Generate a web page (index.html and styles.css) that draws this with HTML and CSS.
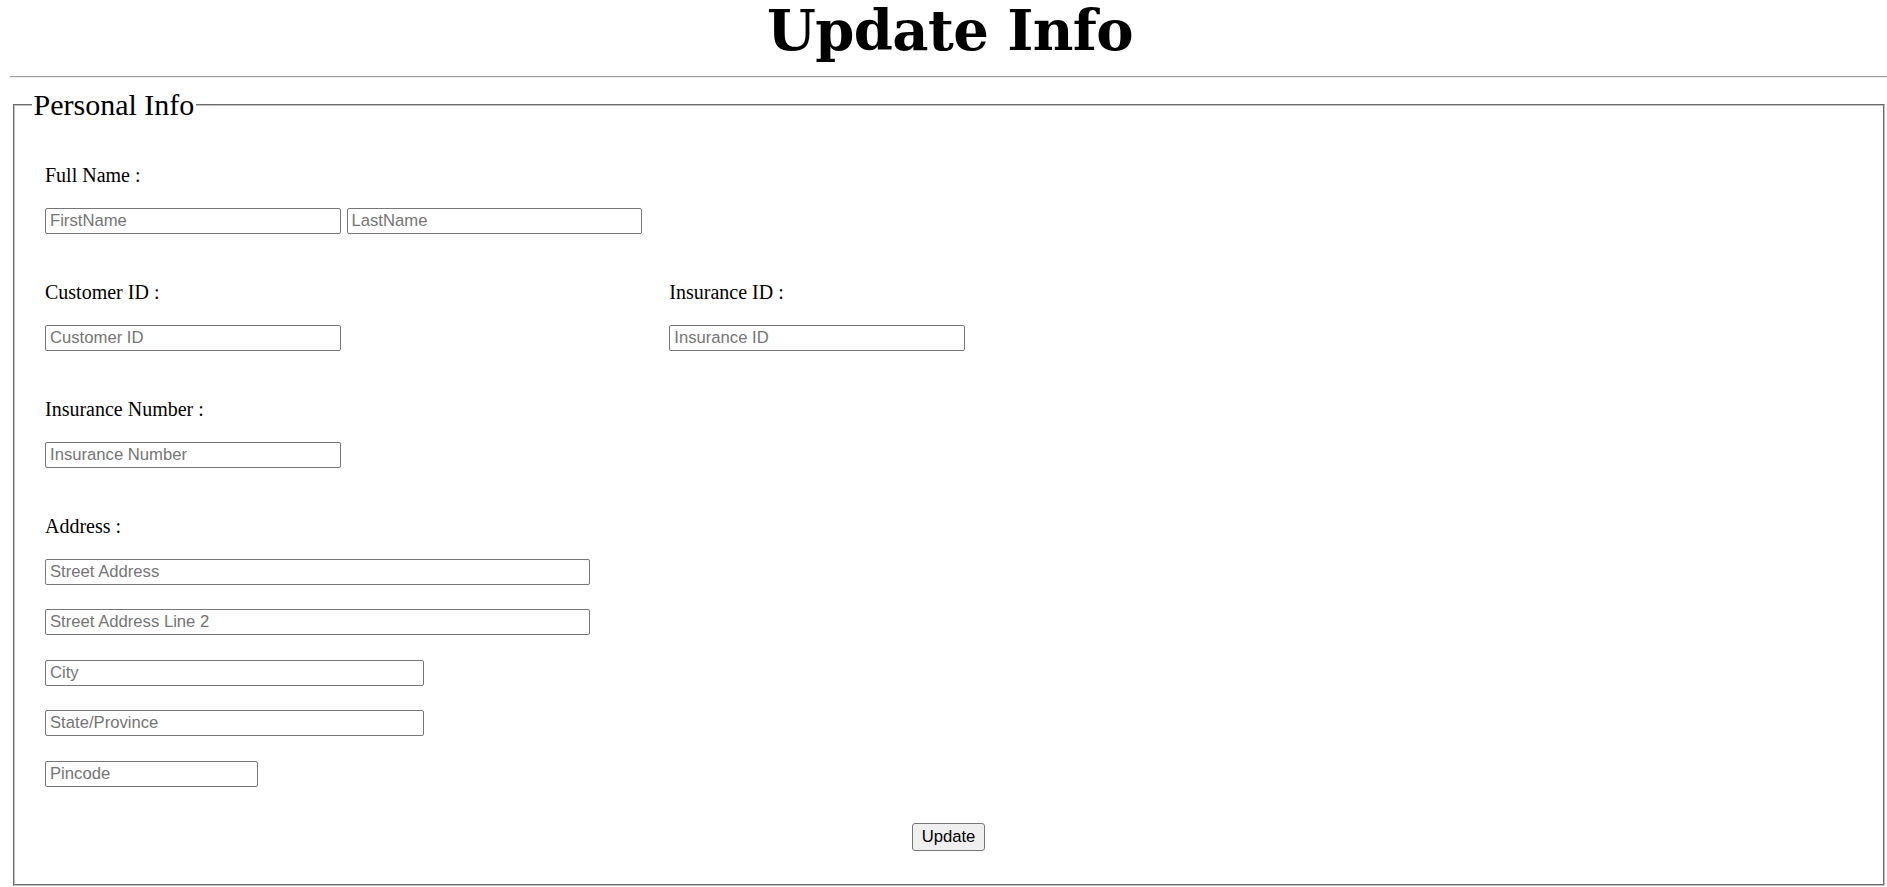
FILE: index.html
```html
<!DOCTYPE html>
<html lang="en">
<head>
<meta charset="utf-8">
<title>Update Info</title>
<link rel="stylesheet" href="styles.css">
</head>
<body>
<h1 class="title">Update Info</h1>
<hr class="divider">
<form class="form">
  <fieldset class="panel">
    <legend class="panel-legend">Personal Info</legend>
    <div class="rows">
      <div class="field">
        <label class="field-label">Full Name :</label>
        <div class="name-inputs">
          <input class="text-input w-name" type="text" placeholder="FirstName">
          <input class="text-input w-name" type="text" placeholder="LastName">
        </div>
      </div>
      <div class="two-col">
        <div class="field">
          <label class="field-label">Customer ID :</label>
          <input class="text-input w-name" type="text" placeholder="Customer ID">
        </div>
        <div class="field">
          <label class="field-label">Insurance ID :</label>
          <input class="text-input w-name" type="text" placeholder="Insurance ID">
        </div>
      </div>
      <div class="field">
        <label class="field-label">Insurance Number :</label>
        <input class="text-input w-name" type="text" placeholder="Insurance Number">
      </div>
      <div class="field">
        <label class="field-label">Address :</label>
        <div class="address-inputs">
          <input class="text-input w-street" type="text" placeholder="Street Address">
          <input class="text-input w-street" type="text" placeholder="Street Address Line 2">
          <input class="text-input w-city" type="text" placeholder="City">
          <input class="text-input w-city" type="text" placeholder="State/Province">
          <input class="text-input w-pin" type="text" placeholder="Pincode">
        </div>
      </div>
    </div>
    <div class="actions">
      <button class="btn" type="button">Update</button>
    </div>
  </fieldset>
</form>
</body>
</html>
```

FILE: styles.css
```css
html {
  overflow: hidden;
}

body {
  margin: 0 0 0 10px;
  font-family: "Liberation Serif", "Times New Roman", serif;
  font-size: 20px;
  color: #000;
  background: #fff;
}

.title {
  margin: 2px 0 0;
  padding-left: 3px;
  font-family: "DejaVu Serif", Georgia, serif;
  font-weight: bold;
  font-size: 56px;
  line-height: 56px;
  letter-spacing: -0.6px;
  text-align: center;
}

.divider {
  height: 0;
  margin: 18px 0 0;
  border: none;
  border-top: 1px solid #9c9c9c;
  border-bottom: 1px solid #ececec;
}

.form {
  margin: 0;
}

.panel {
  margin: 10px 2.5px 0;
  padding: 0 17px 33px;
  border: 2px groove #c0c0c0;
  min-width: 0;
}

.panel-legend {
  padding: 0 2px;
  font-size: 30px;
  line-height: 34px;
}

.rows {
  display: flex;
  flex-direction: column;
  gap: 47px;
  padding: 41.5px 0 0 13.5px;
}

.field {
  display: flex;
  flex-direction: column;
  align-items: flex-start;
}

.field-label {
  display: block;
  line-height: 23px;
  margin-bottom: 21px;
}

.name-inputs {
  display: flex;
  gap: 6px;
}

.two-col {
  display: grid;
  grid-template-columns: 624.3px auto;
}

.address-inputs {
  display: flex;
  flex-direction: column;
  align-items: flex-start;
  gap: 24.5px;
}

.text-input {
  box-sizing: border-box;
  height: 26px;
  margin: 0;
  padding: 0 4px;
  border: 1px solid #767676;
  border-radius: 2px;
  font-family: "Liberation Sans", Arial, sans-serif;
  font-size: 16.67px;
  color: #000;
  background: #fff;
}

.text-input::placeholder {
  color: #757575;
}

.w-name {
  width: 295.5px;
}

.w-street {
  width: 545px;
}

.w-city {
  width: 378.6px;
}

.w-pin {
  width: 212.5px;
}

.actions {
  display: flex;
  justify-content: center;
  margin-top: 36.8px;
}

.btn {
  box-sizing: border-box;
  height: 27.4px;
  margin: 0;
  padding: 0 8.5px;
  border: 1px solid #767676;
  border-radius: 3px;
  background: #efefef;
  font-family: "Liberation Sans", Arial, sans-serif;
  font-size: 16.67px;
  color: #000;
}
```
